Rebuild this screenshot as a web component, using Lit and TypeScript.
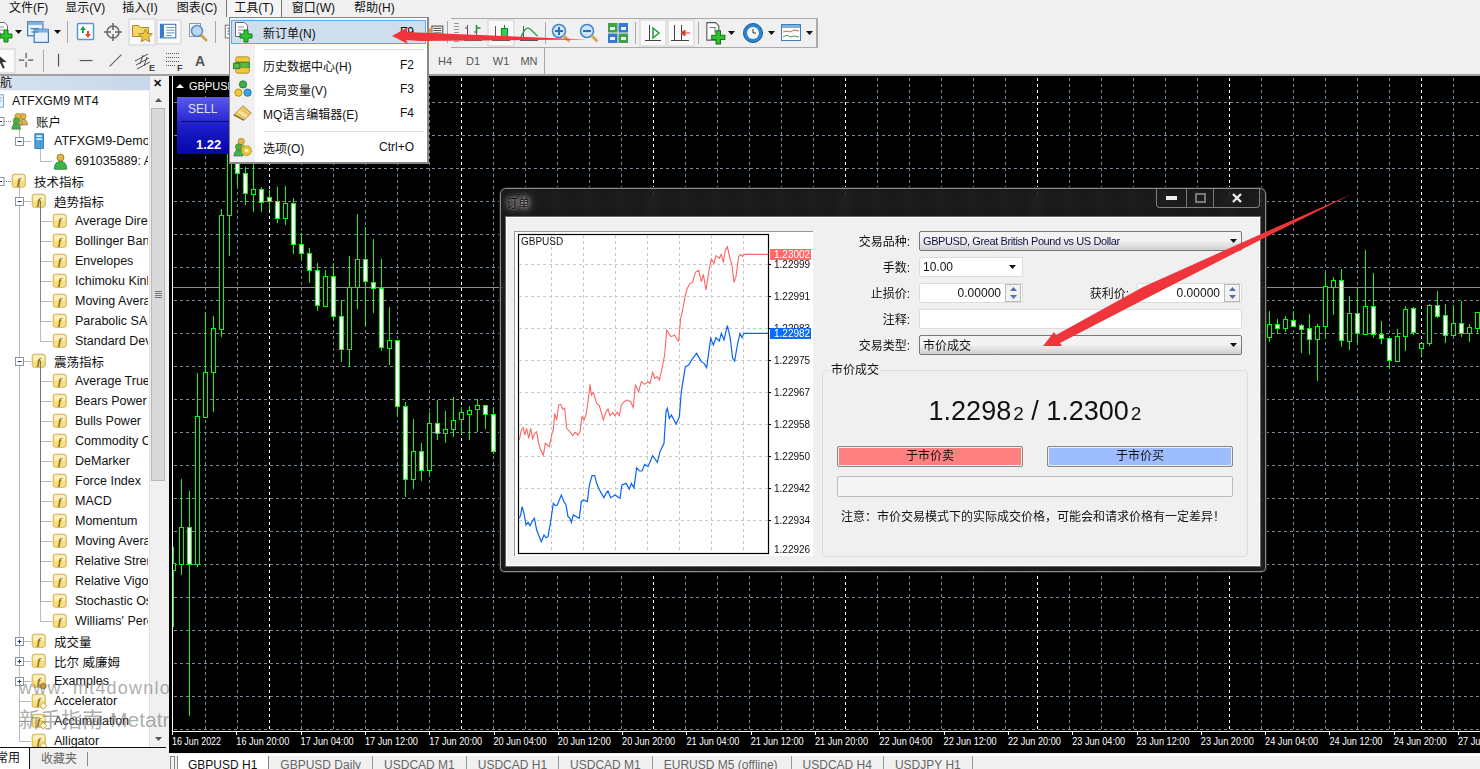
import { LitElement, html, svg, css } from 'lit';
import { customElement } from 'lit/decorators.js';

// ---- small icons -----------------------------------------------------------
const ic = (size: number, body: unknown) => html`<svg width=${size} height=${size} viewBox="0 0 22 22">${body}</svg>`;

const bluePlus = svg`<path d="M12 9h4v4h4v4h-4v4h-4v-4H8v-4h4z" fill="#2fc42f" stroke="#0d7a1a"/>`;
const newOrder = ic(22, svg`<path d="M3.500 1.500h9l3 3v11h-12z" fill="#fff" stroke="#667"/><path d="M6 6h6M6 9h6M6 12h3" stroke="#889"/>${bluePlus}`);
const profiles = ic(24, svg`<rect x="1.500" y="1.500" width="14" height="13" fill="#e8f1fb" stroke="#2a6fb5"/><rect x="1.500" y="1.500" width="14" height="3" fill="#7fb0e2"/><rect x="7.500" y="8.500" width="13" height="12" fill="#e8f1fb" stroke="#2a6fb5"/><rect x="7.500" y="8.500" width="13" height="3" fill="#7fb0e2"/><path d="M4 8h8M5 11h6" stroke="#2a6fb5"/>`);
const market = ic(22, svg`<rect x="2.500" y="2.500" width="16" height="16" rx="1" fill="#fff" stroke="#5a96cf" stroke-width="1.500"/><path d="M8 5l3 4H9v3H7V9H5z" fill="#19a34a"/><path d="M13 17l-3-4h2v-3h2v3h2z" fill="#e5462d"/>`);
const crosshair = ic(22, svg`<circle cx="11" cy="11" r="6" fill="none" stroke="#666" stroke-width="1.500"/><path d="M11 2v7M11 13v7M2 11h7M13 11h7" stroke="#666" stroke-width="1.500"/>`);
const folderStar = ic(22, svg`<path d="M1.500 4.500h6l2 2h8v9h-16z" fill="#f5d565" stroke="#a98a2a"/><path d="M14.500 8l2 4.400 4.800.500-3.600 3.200 1 4.700-4.200-2.400-4.200 2.400 1-4.700-3.600-3.200 4.800-.500z" fill="#f0c640" stroke="#a98a2a"/>`);
const navIcon = ic(20, svg`<rect x="1.500" y="2.500" width="17" height="15" fill="#fff" stroke="#1e5fa8"/><rect x="2" y="3" width="3.500" height="14" fill="#2e7fd0"/><path d="M8 6h9M8 9h9M8 12h9M8 15h6" stroke="#5580aa"/>`);
const magClock = ic(22, svg`<rect x="2.500" y="2.500" width="11" height="13" fill="#eef3f8" stroke="#99a"/><circle cx="10" cy="10" r="5.500" fill="#bcd7f2" stroke="#5a8fc5" stroke-width="1.500"/><path d="M14 14l6 6" stroke="#c9a24a" stroke-width="2.500"/>`);
const listIcon = ic(20, svg`<rect x="2.500" y="3.500" width="15" height="14" fill="#fff" stroke="#666"/><path d="M5 7h10M5 10h10M5 13h10" stroke="#333"/>`);
const oList = ic(20, svg`<rect x="6.500" y="4.500" width="12" height="10" fill="#fff" stroke="#333"/><path d="M8 7h9M8 9.500h9M8 12h9" stroke="#333"/><rect x="1" y="7" width="5" height="5" fill="#ee9a33"/>`);
const barsIcon = ic(22, svg`<path d="M5.500 3v14M3 6h2M5.500 14h3M14.500 3v14M12 10h2" stroke="#555"/><path d="M14.500 3v8M14.500 6h4" stroke="#15953a" stroke-width="1.500"/><path d="M2 18.500h18" stroke="#555"/>`);
const candleIcon = ic(22, svg`<path d="M5.500 4v14M2 18.500h18" stroke="#555"/><path d="M14.500 3v15" stroke="#0c8a2a"/><rect x="11.500" y="6.500" width="6" height="9" fill="#2fd14a" stroke="#0c8a2a"/>`);
const lineIcon = ic(22, svg`<path d="M5.500 4v14M2 18.500h18" stroke="#555"/><path d="M3 15c4-9 6-10 9-8s5 6 8 7" fill="none" stroke="#2f9a4a" stroke-width="1.300"/>`);
const lens = (sign: unknown) => ic(22, svg`<circle cx="9" cy="9" r="6.500" fill="#cfe4f8" stroke="#3f86c7" stroke-width="1.500"/>${sign}<path d="M13.500 13.500l6 6" stroke="#d3aa55" stroke-width="3"/>`);
const zoomIn = lens(svg`<path d="M5 9h8M9 5v8" stroke="#2d6fb0" stroke-width="2"/>`);
const zoomOut = lens(svg`<path d="M5 9h8" stroke="#2d6fb0" stroke-width="2"/>`);
const tile = ic(22, svg`<rect x="1" y="1" width="9.500" height="9.500" fill="#3fa34d"/><rect x="11.500" y="1" width="9.500" height="9.500" fill="#3a78d0"/><rect x="1" y="11.500" width="9.500" height="9.500" fill="#3a78d0"/><rect x="11.500" y="11.500" width="9.500" height="9.500" fill="#3fa34d"/><path d="M3 5h5v3H3zM14 5h5v3h-5zM3 15h5v3H3zM14 15h5v3h-5z" fill="#e6f0e6"/>`);
const shiftIcon = ic(22, svg`<path d="M7.500 3v15.500M3 18.500h16" stroke="#444"/><path d="M11 6l6 5-6 5z" fill="none" stroke="#1aa03a" stroke-width="1.500"/>`);
const autoIcon = ic(22, svg`<path d="M4.500 3v15.500M11.500 3v15.500M1 18.500h18" stroke="#444"/><path d="M20 11h-5M15 8l-4 3 4 3z" fill="#d64028" stroke="#d64028"/>`);
const addChart = ic(24, svg`<path d="M3.500 1.500h8l3 3v13h-11z" fill="#fff" stroke="#555"/><path d="M6 6h5v5" fill="none" stroke="#777"/>${bluePlus}`);
const clockIcon = ic(22, svg`<circle cx="11" cy="11" r="9.500" fill="#2c84cf" stroke="#175a96"/><circle cx="11" cy="11" r="6" fill="#f4f8fb"/><path d="M11 7v4h3" fill="none" stroke="#333"/>`);
const templateIcon = ic(22, svg`<rect x="1.500" y="2.500" width="19" height="16" fill="#fff" stroke="#3f7fbf"/><rect x="2" y="3" width="18" height="3" fill="#7fb0e2"/><path d="M3 10l4-1 3 1 4-2 5 1" fill="none" stroke="#c9683a"/><path d="M3 15l4-2 3 2 4-1 5 1" fill="none" stroke="#3aa04a"/>`);
const arrowCur = ic(20, svg`<path d="M4 3l11 9-5 .500 3 6-2 1-3-6-4 3z" fill="#333"/>`);
const crossTool = ic(20, svg`<path d="M10 2v6M10 12v6M2 10h6M12 10h6" stroke="#555" stroke-width="1.300"/>`);
const vLine = ic(20, svg`<path d="M10.500 3v14" stroke="#555" stroke-width="1.300"/>`);
const hLine = ic(20, svg`<path d="M3 10.500h14" stroke="#555" stroke-width="1.300"/>`);
const dLine = ic(20, svg`<path d="M4 17L17 4" stroke="#666" stroke-width="1.300"/>`);
const channelIcon = ic(22, svg`<path d="M1 11l13-7M2 15l13-7M3 19l13-7M6 14l3-9M10 16l3-9" stroke="#555"/><text x="15" y="21" font-size="9" font-weight="700" fill="#444" font-family="Liberation Sans">E</text>`);
const fiboIcon = ic(22, svg`<path d="M2 3.500h14M2 7.500h14M2 11.500h14M2 15.500h10" stroke="#555" stroke-dasharray="1 1"/><text x="13" y="21" font-size="9" font-weight="700" fill="#444" font-family="Liberation Sans">F</text>`);
const aIcon = html`<span class="a-tool">A</span>`;

const fBox = (extra: unknown = '') => ic(17, svg`<rect x="1.500" y="1.500" width="17" height="17" rx="3" fill="#f7df80" stroke="#c2a23e"/><rect x="3" y="3" width="14" height="7" rx="2" fill="#fdf1bd"/><text x="10" y="15" text-anchor="middle" font-size="14" font-style="italic" font-weight="700" fill="#8a6a12" font-family="Liberation Serif">f</text>${extra}`);
const treeF = fBox();
const treeEx = fBox(svg`<circle cx="16" cy="17" r="3.500" fill="#d99a2b" stroke="#8a5d10"/>`);
const treeInd = fBox(svg`<path d="M16 12l4.500 4.500-4.500 4.500-4.500-4.500z" fill="#fff6d0" stroke="#b08a2a"/>`);
const person = (c: string, x: number, y: number) => svg`<circle cx=${x} cy=${y} r="3.500" fill=${c} stroke="#8a6a12" stroke-width=".6"/><path d="M${x - 5} ${y + 10}c0-5 2-6.500 5-6.500s5 1.500 5 6.500z" fill=${c} stroke="#555" stroke-width=".6"/>`;
const accounts = ic(19, svg`${person('#e0b84a', 14, 5)}${person('#e0b84a', 8, 5)}${person('#3bb54a', 6, 10)}`);
const server = ic(17, svg`<rect x="5" y="1" width="11" height="19" fill="#4aa3e0" stroke="#1c6aa8"/><rect x="7" y="3" width="7" height="2" fill="#e7f4fd"/><rect x="7" y="7" width="7" height="2" fill="#e7f4fd"/>`);
const user = ic(17, svg`<circle cx="11" cy="6" r="4.500" fill="#e0b84a" stroke="#8a6a12"/><path d="M3 21c0-7 3-10 8-10s8 3 8 10z" fill="#3bb54a" stroke="#1a7a2a"/>`);
const rootIcon = ic(16, svg`<rect x="3.500" y="2.500" width="15" height="17" fill="#eaf3fb" stroke="#4a8cc5"/><path d="M6 7h10M6 11h10" stroke="#4a8cc5"/>`);

const menuHist = ic(20, svg`<rect x="3" y="2" width="15" height="6" rx="2" fill="#f2c83a" stroke="#a98a2a"/><rect x="3" y="8" width="15" height="6" fill="#58b848" stroke="#2a7a2a"/><rect x="3" y="14" width="15" height="6" rx="2" fill="#f2c83a" stroke="#a98a2a"/><rect x="0.500" y="9" width="7" height="6" fill="#58b848" stroke="#2a7a2a"/>`);
const menuVars = ic(20, svg`<circle cx="11" cy="6" r="4" fill="#42b04a" stroke="#1f7a2a"/><circle cx="6" cy="15" r="4" fill="#f0c93a" stroke="#a88a1a"/><circle cx="16" cy="15" r="4" fill="#3aa6e0" stroke="#1a70a8"/>`);
const menuEd = ic(20, svg`<path d="M1 13L11 3l9 8-8 8z" fill="#ecc662" stroke="#a9853a"/><path d="M1 13l11 6" stroke="#8a6a22" stroke-width="1.500"/><path d="M6 9l9 6" stroke="#f8e7a8" stroke-width="3"/>`);
const menuOpt = ic(20, svg`${person('#e0b84a', 9, 5)}${person('#3bb54a', 6, 11)}<circle cx="15" cy="15" r="5.500" fill="#e6c43a" stroke="#a88a1a" stroke-dasharray="2 1"/><circle cx="15" cy="15" r="2" fill="#fff7c8"/>`);

const caret = html`<svg width="7" height="4" viewBox="0 0 7 4"><path d="M0 0h7L3.500 4z" fill="#111"/></svg>`;

// ---- chart data, measured from the picture ---------------------------------
// [bodyTop, bodyBottom, wickTop, wickBottom, filled]; y = base + v / 3
type Candle = [number, number, number, number, number];
const leftCandles: Candle[] = [
  [1239,1260,1191,1431,0],[1131,1242,987,1275,0],[1131,1242,1023,1698,1],[798,1242,670,1251,0],[667,800,485,800,0],
  [535,665,498,785,0],[196,536,178,560,0],[-60,196,-60,318,0],[-60,70,-60,110,1],[70,128,52,165,1],[118,131,40,186,0],
  [118,157,112,186,1],[140,152,120,180,1],[154,203,112,218,1],[160,203,108,225,0],[160,281,145,312,1],[281,310,250,332,1],
  [310,361,295,398,1],[361,466,340,482,1],[379,467,360,470,0],[379,497,340,510,1],[497,598,450,635,1],[410,598,318,650,0],
  [328,410,192,476,0],[328,394,232,528,1],[397,415,267,488,1],[414,592,328,603,1],[571,593,471,645,0],[571,769,571,800,1],
  [769,988,757,1040,1],[904,988,807,1016,0],[904,961,880,992,1],[820,961,786,976,0],[820,850,750,870,1],[838,850,783,878,0],
  [811,838,742,860,0],[787,808,770,852,0],[781,791,768,870,0],[766,778,748,845,0],[766,793,766,838,1],[793,902,772,912,1],
];
const rightCandles: Candle[] = [
  [193,230,153,246,0],[193,203,178,222,1],[178,203,168,216,0],[181,197,153,197,1],[196,206,192,278,1],[205,238,162,285,1],
  [199,238,193,362,0],[79,199,40,237,0],[61,80,52,165,0],[61,241,27,260,1],[160,244,108,270,0],[160,220,85,255,1],
  [139,223,-30,223,0],[139,223,40,233,1],[223,235,183,252,1],[235,301,235,327,1],[229,302,207,302,0],[148,229,138,273,0],
  [145,215,141,225,1],[250,265,250,288,0],[136,250,132,258,0],[136,167,93,173,1],[166,226,132,249,1],[190,226,135,232,0],
  [190,220,123,232,1],[202,220,192,246,0],[157,203,157,220,0],
];
// lines of the order dialog, in 3x picture units
const askLine = '58,765 64,735 70,728 74,750 80,730 86,760 92,730 98,762 104,745 110,740 116,775 122,795 130,810 136,775 148,785 156,745 160,735 164,685 170,705 176,660 182,658 188,672 194,670 200,730 208,738 218,752 226,742 234,750 240,740 246,695 252,705 258,690 264,650 270,598 274,630 280,622 290,655 298,662 310,705 318,680 324,672 330,692 338,683 344,692 352,682 358,692 364,660 372,650 382,645 392,650 400,668 406,600 416,620 424,590 434,598 444,590 450,596 458,562 464,580 472,575 478,585 486,550 494,510 500,435 508,448 514,455 524,450 530,462 536,468 542,400 548,375 556,330 562,310 570,295 578,292 586,262 596,256 604,290 610,268 618,315 628,250 634,222 642,235 648,212 658,220 664,208 670,232 676,195 682,185 690,220 696,240 702,292 708,275 716,215 722,208 728,215 732,208 805,208';
const bidLine = '58,1000 62,990 66,965 72,985 78,1020 84,1012 90,1022 96,1010 103,1000 110,1035 118,1055 124,1070 132,1050 138,1058 144,1055 152,1010 160,955 166,962 172,960 184,930 192,950 198,960 204,995 210,1000 214,1012 220,990 238,1000 244,950 250,945 262,950 268,900 276,872 284,872 290,895 296,910 304,925 312,938 318,925 324,918 332,938 345,930 360,940 366,900 378,895 388,912 394,895 402,908 410,848 418,858 426,858 434,838 444,845 458,812 472,832 480,800 492,775 498,680 502,670 508,700 514,690 522,705 528,717 538,695 544,620 556,545 566,540 578,520 590,505 604,530 612,535 620,548 632,460 640,480 648,458 658,468 664,445 672,465 682,422 690,455 698,520 704,528 712,480 720,445 726,458 732,445 805,445';

const timeLabels = (() => {
  const out: string[] = ['16 Jun 2022'];
  let d = 16, h = 20;
  for (let i = 1; i < 21; i++) {
    out.push(`${d} Jun ${String(h).padStart(2, '0')}:00`);
    h += 8;
    if (h >= 24) { h -= 24; d++; }
    if (d === 18) d = 20; // weekend
    if (d === 25) d = 27;
  }
  return out;
})();

type Row = { t: string; l: number; i: unknown; e?: '+' | '-' };
const ind = (names: string[]): Row[] => names.map((t) => ({ t, l: 3, i: treeF }));
const treeRows: Row[] = [
  { t: 'ATFXGM9 MT4', l: 0, i: rootIcon },
  { t: '账户', l: 1, i: accounts, e: '-' },
  { t: 'ATFXGM9-Demo', l: 2, i: server, e: '-' },
  { t: '691035889: ATFX', l: 3, i: user },
  { t: '技术指标', l: 1, i: treeF, e: '-' },
  { t: '趋势指标', l: 2, i: treeF, e: '-' },
  ...ind(['Average Directional', 'Bollinger Bands', 'Envelopes', 'Ichimoku Kinko', 'Moving Average', 'Parabolic SAR', 'Standard Deviation']),
  { t: '震荡指标', l: 2, i: treeF, e: '-' },
  ...ind(['Average True Range', 'Bears Power', 'Bulls Power', 'Commodity Channel', 'DeMarker', 'Force Index', 'MACD', 'Momentum', 'Moving Average', 'Relative Strength', 'Relative Vigor', 'Stochastic Osc', "Williams' Percent"]),
  { t: '成交量', l: 2, i: treeF, e: '+' },
  { t: '比尔 威廉姆', l: 2, i: treeF, e: '+' },
  { t: 'Examples', l: 2, i: treeEx, e: '+' },
  { t: 'Accelerator', l: 2, i: treeInd },
  { t: 'Accumulation', l: 2, i: treeInd },
  { t: 'Alligator', l: 2, i: treeInd },
];

type Tool = { w: number; i?: unknown; on?: boolean; sep?: boolean };
const t = (w: number, i?: unknown, on = false): Tool => ({ w, i, on });
const sep = (w: number): Tool => ({ w, sep: true });

const bar1Left: Tool[] = [
  t(22, newOrder), t(8, caret), t(32, profiles), t(6, caret), sep(15), t(21, market), t(34, crosshair),
  t(24, folderStar, true), t(30, navIcon, true), t(28, magClock), sep(7), t(28, listIcon), t(181), t(16, oList),
];
const bar1Right: Tool[] = [
  t(28, barsIcon), t(28, candleIcon, true), t(28, lineIcon), sep(4), t(28, zoomIn), t(28, zoomOut), t(29, tile), sep(6),
  t(29, shiftIcon, true), t(28, autoIcon, true), sep(6), t(27, addChart), t(6, caret), t(5), t(27, clockIcon), t(10, caret),
  t(30, templateIcon), t(6, caret),
];
const bar2: Tool[] = [
  t(22, arrowCur, true), t(26, crossTool), sep(6), t(26, vLine), t(30, hLine), t(28, dLine), t(30, channelIcon), t(30, fiboIcon),
  t(20, aIcon), t(14),
];

@customElement('app-root')
export class AppRoot extends LitElement {
  static styles = css`
    :host {
      display: block;
      position: relative;
      width: 1480px;
      height: 769px;
      overflow: hidden;
      background: #f0f0f0;
      color: #111;
      font-family: "Liberation Sans", "Noto Sans CJK SC", sans-serif;
      font-size: 12px;
    }
    svg { display: block; flex: none; }

    .menubar { display: flex; height: 17px; padding-left: 1px; line-height: 16px; }
    .menubar span { padding: 0 8px; margin-right: 1px; white-space: nowrap; }
    .menubar span:nth-child(3) { margin-right: 3px; }
    .menubar span:nth-child(6) { margin-right: 3px; }
    .menubar span.open {
      padding: 0 7px;
      margin: 0 2px 0 0;
      border-left: 1px solid #777;
      border-right: 1px solid #777;
      background: #f5f5f5;
    }

    .tb { display: flex; align-items: center; height: 30px; margin-left: -8px; }
    .tb2 { height: 27px; border-bottom: 2px solid #a0a0a0; }
    .tool { display: flex; align-items: center; justify-content: center; flex: none; height: 100%; }
    .tool.on > svg, .tool.on > .a-tool {
      padding: 2px;
      background: #fafafa;
      outline: 2px solid #e2e2e2;
      outline-offset: -1px;
    }
    .sepline { width: 1px; height: 22px; background: #a8a8a8; }
    .grip { width: 5px; height: 20px; margin-left: 3px; background: repeating-linear-gradient(#999 0 1px, transparent 1px 3px); }
    .group {
      display: flex;
      align-items: center;
      height: 28px;
      margin-top: 2px;
      padding-right: 4px;
      border: 1px solid #aaa;
      border-width: 1px 2px 1px 0;
    }
    .a-tool { font-size: 14px; font-weight: 700; color: #555; }
    .tf { color: #555; font-size: 11px; width: 28px; text-align: center; flex: none; }
    .tf-first { margin-left: 3px; }
    .tf-end { width: 1px; height: 27px; background: #a8a8a8; margin-left: 1px; }
    .spacer { width: 198px; }
    .stub { width: 6px; }

    .main { display: flex; height: 693px; }
    .nav { width: 166px; display: flex; flex-direction: column; flex: none; }
    .nav-head {
      display: flex;
      align-items: center;
      justify-content: space-between;
      height: 14px;
      line-height: 14px;
      margin-left: -12px;
      padding-right: 3px;
    }
    .nav-title { width: 162px; background: linear-gradient(90deg, #d7e2ef, #c8d8ea); }
    .nav-x { font-size: 11px; font-weight: 700; margin-right: 1px; }
    .nav-body { position: relative; display: flex; flex: 1; min-height: 0; margin-top: 1px; }
    .tree { position: relative; width: 149px; overflow: hidden; background: #fff; }
    .row {
      display: flex;
      align-items: center;
      gap: 6px;
      width: 148px;
      box-sizing: border-box;
      overflow: hidden;
      height: 20px;
      white-space: nowrap;
      font-size: 12.500px;
      color: #111;
    }
    .l0 { margin-left: -10px; width: 158px; }
    .l1 { padding-left: 11px; }
    .l2 { padding-left: 31px; }
    .l3 { padding-left: 52px; }
    .guides { position: absolute; left: 0; top: 0; }
    .wm {
      position: absolute;
      left: 19px;
      white-space: nowrap;
      width: 153px;
      overflow: hidden;
      color: rgba(120, 120, 120, 0.62);
    }
    .wm1 { top: 675px; font-size: 18px; letter-spacing: 1.200px; line-height: 26px; }
    .wm2 { top: 706px; font-size: 21px; line-height: 28px; }
    .scroll { width: 16px; display: flex; flex-direction: column; align-items: center; background: #f0f0f0; border-left: 1px solid #e0e0e0; }
    .sc-btn { height: 17px; display: flex; align-items: center; justify-content: center; flex: none; }
    .thumb {
      width: 14px;
      height: 373px;
      display: flex;
      align-items: center;
      justify-content: center;
      background: #d9d9d9;
      border: 1px solid #b8b8b8;
      box-sizing: border-box;
    }
    .thumb i { display: block; width: 7px; height: 7px; background: repeating-linear-gradient(#777 0 1px, transparent 1px 2px); }
    .sc-rest { flex: 1; }
    .nav-tabs { display: flex; align-items: center; height: 21px; border-top: 1px solid #111; flex: none; }
    .nt-on {
      width: 30px;
      flex: none;
      display: flex;
      justify-content: flex-end;
      padding-right: 9px;
      box-sizing: border-box;
      border-right: 1px solid #111;
      height: 100%;
      line-height: 20px;
      background: #fff;
      white-space: nowrap;
      overflow: hidden;
    }
    .nt { color: #666; padding: 0 10px 0 11px; border-right: 1px solid #888; line-height: 14px; }

    .work { flex: 1; display: flex; flex-direction: column; margin-left: 3px; min-width: 0; }
    .chart { background: #000; height: 677px; flex: none; }
    .chart-tabs {
      display: flex;
      height: 14px;
      margin-top: 1px;
      border-top: 2px solid #fff;
      overflow: hidden;
      color: #666;
      padding-left: 1px;
    }
    .chart-tabs::before { content: ''; width: 3px; margin-right: 2px; border: 1px solid #888; border-bottom: 0; flex: none; }
    .ct { padding: 0 11px; line-height: 19px; border-right: 1px solid #999; white-space: nowrap; height: 14px; }
    .ct.on { color: #111; background: #fff; border-left: 1px solid #888; border-right: 1px solid #888; padding: 0 11px 0 10px; }
    .ct.wide { padding: 0 13px 0 11px; }

    .symbol { position: absolute; left: 175px; top: 78px; width: 60px; }
    .sym-name { display: flex; align-items: center; gap: 3px; height: 15px; color: #fff; font-size: 11px; padding-left: 1px; white-space: nowrap; }
    .tri { width: 0; height: 0; border: 4px solid transparent; border-top: 0; border-bottom: 4px solid #fff; margin-right: 2px; }
    .sell {
      margin: 4px 0 0 2px;
      height: 57px;
      background: linear-gradient(#5a5af0, #1a1ac8 55%, #0505a8);
      color: #fff;
    }
    .sell-l { padding: 5px 0 0 11px; height: 19px; font-size: 12px; color: #dfe3ff; }
    .sell-r { border-top: 1px solid #0a0a70; margin: 0 4px; padding: 15px 0 0 15px; font-size: 13px; font-weight: 700; }

    .menu {
      position: absolute;
      left: 229px;
      top: 17px;
      width: 195px;
      padding: 2px 1px 3px;
      background: linear-gradient(90deg, #f0f0f0 0 25px, #fff 25px);
      border: 1px solid #888;
      border-right-width: 2px;
      border-bottom-width: 2px;
      z-index: 2;
    }
    .mi { display: flex; align-items: center; height: 24px; padding-right: 12px; }
    .mi.hl { background: #cfdeed; outline: 1px solid #5aa8f2; outline-offset: -1px; }
    .mi .mic { width: 24px; display: flex; justify-content: center; }
    .mi .lbl { margin-left: 8px; flex: 1; }
    .msep { height: 1px; margin: 5px 2px 3px 33px; background: #ddd; }
    .msep.b { margin: 6px 2px 3px 33px; }

    .dialog {
      position: absolute;
      left: 500px;
      top: 188px;
      width: 766px;
      height: 384px;
      box-sizing: border-box;
      display: flex;
      flex-direction: column;
      padding: 0 4px 4px;
      border: 1px solid #8a8a8a;
      border-radius: 6px 6px 4px 4px;
      background: rgba(45, 45, 45, 0.55);
      backdrop-filter: blur(6px);
      box-shadow: 0 0 0 1px #222;
      z-index: 1;
    }
    .dlg-title { display: flex; height: 27px; flex: none; }
    .dlg-name {
      color: #181018;
      font-size: 12px;
      padding-top: 5px;
      margin-left: 1px;
      text-shadow: 0 0 3px #c8c8c8, 0 0 7px #aaa, 0 0 12px #999;
    }
    .dlg-btns {
      display: flex;
      height: 18px;
      margin-left: auto;
      margin-right: 1px;
      border: 1px solid #808080;
      border-top: 0;
      border-radius: 0 0 4px 4px;
    }
    .dlg-btns div { display: flex; align-items: center; justify-content: center; border-left: 1px solid #777; }
    .dlg-btns div:first-child { width: 29px; border-left: 0; }
    .dlg-btns div:nth-child(2) { width: 26px; }
    .dlg-btns div:nth-child(3) { width: 45px; }
    .client {
      flex: 1;
      display: flex;
      gap: 9px;
      padding: 14px 0 0 8px;
      background: #f0f0f0;
      border: 1px solid #666;
      box-shadow: inset 0 0 0 1px #fff;
      min-height: 0;
    }
    .pane { width: 299px; height: 325px; flex: none; background: #fff; border-top: 1px solid #999; border-left: 1px solid #999; box-sizing: border-box; }
    .side { width: 426px; flex: none; }
    .form { display: grid; grid-template-columns: 88px 1fr; column-gap: 9px; row-gap: 6px; grid-auto-rows: 20px; align-items: center; padding-right: 6px; }
    .lab { text-align: right; white-space: nowrap; padding-bottom: 2px; }
    .select {
      display: flex;
      align-items: center;
      justify-content: space-between;
      height: 20px;
      box-sizing: border-box;
      padding: 0 4px 0 3px;
      background: linear-gradient(#f3f3f3 45%, #cfcfcf);
      border: 1px solid #777;
      border-radius: 2px;
      color: #10104a;
      font-size: 11px;
      letter-spacing: -0.400px;
    }
    .select .cjk { font-size: 12px; letter-spacing: 0; color: #111; padding-bottom: 2px; }
    .input {
      height: 20px;
      box-sizing: border-box;
      background: #fff;
      border: 1px solid #dcdcdc;
      border-radius: 2px;
      display: flex;
      align-items: center;
      padding: 0 3px;
    }
    .lots { width: 104px; justify-content: space-between; padding-right: 6px; }
    .wide-input { width: 100%; }
    .sl { display: flex; align-items: center; justify-content: space-between; }
    .spin { width: 104px; justify-content: flex-end; padding: 0 1px 0 0; gap: 4px; }
    .tp { width: 105px; }
    .sl .lab { margin-left: auto; margin-right: 8px; }
    .arrows { width: 16px; height: 18px; display: flex; flex-direction: column; justify-content: space-around; align-items: center; border: 1px solid #bbb; box-sizing: border-box; background: #f2f2f2; }
    .group-box {
      position: relative;
      margin-top: 15px;
      height: 187px;
      box-sizing: border-box;
      padding: 24px 14px 0;
      border: 1px solid #d7dfe6;
      border-radius: 4px;
    }
    .legend { position: absolute; left: 7px; top: -8px; padding: 0 1px; background: #f0f0f0; line-height: 15px; }
    .price { height: 32px; line-height: 32px; text-align: center; font-size: 27px; color: #111; white-space: nowrap; }
    .price small { font-size: 19px; margin-left: 2px; }
    .btns { display: flex; justify-content: space-between; margin-top: 19px; }
    .btn { width: 186px; height: 21px; line-height: 19px; text-align: center; box-sizing: border-box; border: 1px solid #888; border-radius: 2px; box-shadow: inset 0 0 0 1px #eee; }
    .sellb { background: #ff8080; }
    .buyb { background: #9dbdff; }
    .bar { height: 21px; margin-top: 9px; box-sizing: border-box; background: #f4f4f4; border: 1px solid #bcbcbc; border-radius: 2px; }
    .note { margin-top: 12px; padding-left: 4px; line-height: 16px; white-space: nowrap; }

    .arrows-layer { position: absolute; left: 0; top: 0; z-index: 3; pointer-events: none; }
  `;

  private tools(list: Tool[]) {
    return list.map((x) => html`<div class="tool ${x.on ? 'on' : ''}" style="width:${x.w}px">
      ${x.sep ? html`<div class="sepline"></div>` : x.i}
    </div>`);
  }

  private guides() {
    const parts: unknown[] = [];
    let lastL1 = 0, lastL2 = 0;
    treeRows.forEach((r, idx) => {
      const y = idx * 20 + 10.5;
      if (r.l === 1) {
        parts.push(svg`<path d="M0 ${y}H11"/>`);
        lastL1 = idx;
      }
      if (r.l === 2) {
        const from = Math.max(lastL1, lastL2) * 20 + 10.5;
        parts.push(svg`<path d="M19.500 ${from}V${y}M19.500 ${y}H31"/>`);
        lastL2 = idx;
      }
      if (r.l === 3) {
        parts.push(svg`<path d="M40.500 ${lastL2 * 20 + 10.5}V${y}M40.500 ${y}H52"/>`);
      }
    });
    const boxes = treeRows.map((r, idx) => {
      if (!r.e) return '';
      const x = r.l === 1 ? 0 : 19.5;
      const y = idx * 20 + 10.5;
      return svg`<rect x=${x - 4} y=${y - 4} width="8" height="8" fill="#fff" stroke="#8a94a6"/>
        <path d="M${x - 2} ${y}h4${r.e === '+' ? ` M${x} ${y - 2}v4` : ''}" stroke="#223a78"/>`;
    });
    return svg`<g fill="none" stroke="#777" stroke-dasharray="1 1">${parts}</g>${boxes}`;
  }

  private chart() {
    const vs: unknown[] = [];
    for (let x = 205; x < 1480; x += 32) {
      const white = (x - 269) % 192 === 0;
      vs.push(svg`<path d="M${x + 0.5} 78V731" stroke=${white ? '#fff' : '#778899'} stroke-dasharray="3 3"/>`);
    }
    const hs: unknown[] = [];
    for (let y = 102; y < 731; y += 33) hs.push(svg`<path d="M174 ${y + 0.5}H1480" stroke="#778899" stroke-dasharray="3 3"/>`);
    const candle = (c: Candle, x: number, base: number) => {
      const y = (v: number) => Math.round(base + v / 3);
      return svg`<path d="M${x + 0.5} ${y(c[2])}V${y(c[3])}" stroke="#00ff00"/>
        <rect x=${x - 1.5} y=${y(c[0]) + 0.5} width="4" height=${Math.max(y(c[1]) - y(c[0]), 2)} fill=${c[4] ? '#fff' : '#000'} stroke="#00ff00"/>`;
    };
    const ticks = timeLabels.map((s, i) => {
      const x = 172 + 64.3 * i;
      return svg`<path d="M${Math.round(x) + 0.5} 731v4" stroke="#fff"/>
        <text x=${x} y="745" fill="#fff" font-size="10.5" font-family="Liberation Sans" textLength=${i ? 53 : 49} lengthAdjust="spacingAndGlyphs">${s}</text>`;
    });
    return html`<svg width="1311" height="677" viewBox="169 76 1311 677">
      <defs><clipPath id="plot"><rect x="173" y="76" width="1307" height="655"/></clipPath></defs>
      ${vs}${hs}
      <path d="M173 287.500H1480" stroke="#8a9098"/>
      <g clip-path="url(#plot)">
        ${leftCandles.map((c, i) => candle(c, 173 + 8 * i, 150))}
        ${rightCandles.map((c, i) => candle(c, 1269 + 8 * i, 260))}
      </g>
      <path d="M172.500 76V731.500H1480" fill="none" stroke="#fff"/>
      ${ticks}
    </svg>`;
  }

  private orderChart() {
    const ys = [264, 296, 328, 360, 392, 424, 456, 488, 520];
    const xs = [551, 583, 615, 647, 679, 711, 743];
    const labels = ['1.22999', '1.22991', '1.22983', '1.22975', '1.22967', '1.22958', '1.22950', '1.22942', '1.22934'];
    const pts = (line: string) => line.split(' ').map((p) => {
      const [a, b] = p.split(',').map(Number);
      return `${500 + a / 3},${185 + b / 3}`;
    }).join(' ');
    return html`<svg width="298" height="324" viewBox="515 232 298 324">
      <rect x="518.500" y="234.500" width="250" height="319" fill="#fff" stroke="#000" stroke-width="1.200"/>
      ${xs.map((x) => svg`<path d="M${x + 0.5} 235V553" stroke="#c8c8c8" stroke-dasharray="3 3"/>`)}
      ${ys.map((y) => svg`<path d="M519 ${y + 0.5}H768" stroke="#c8c8c8" stroke-dasharray="3 3"/>`)}
      <polyline points=${pts(askLine)} fill="none" stroke="#ff6464" stroke-width="1.100"/>
      <polyline points=${pts(bidLine)} fill="none" stroke="#0a64f0" stroke-width="1.200"/>
      <text x="521" y="245" font-size="10" fill="#111" font-family="Liberation Sans">GBPUSD</text>
      ${ys.map((y, i) => svg`<path d="M768 ${y + 0.5}h3" stroke="#000"/><text x="774" y=${y + 4} font-size="10" fill="#111" font-family="Liberation Sans">${labels[i]}</text>`)}
      <text x="774" y="553" font-size="10" fill="#111" font-family="Liberation Sans">1.22926</text>
      <rect x="770" y="249" width="41" height="11" fill="#ff6a6a"/>
      <text x="774" y="258" font-size="10" fill="#fff" font-family="Liberation Sans">1.23002</text>
      <rect x="770" y="328" width="41" height="11" fill="#0a6cff"/>
      <text x="774" y="337" font-size="10" fill="#fff" font-family="Liberation Sans">1.22982</text>
    </svg>`;
  }

  render() {
    const smallArrows = (c = '#5570a8') => html`<div class="arrows">
      <svg width="7" height="4" viewBox="0 0 7 4"><path d="M3.500 0L7 4H0z" fill=${c}/></svg>
      <svg width="7" height="4" viewBox="0 0 7 4"><path d="M0 0h7L3.500 4z" fill=${c}/></svg>
    </div>`;
    return html`
      <div class="menubar">
        <span>文件(F)</span><span>显示(V)</span><span>插入(I)</span><span>图表(C)</span>
        <span class="open">工具(T)</span><span>窗口(W)</span><span>帮助(H)</span>
      </div>
      <div class="tb">
        ${this.tools(bar1Left)}
        ${this.tools([sep(7)])}
        <div class="group">
          <div class="grip"></div>
          ${this.tools(bar1Right)}
        </div>
      </div>
      <div class="tb tb2">
        ${this.tools(bar2)}
        <div class="tool spacer"></div>
        <div class="tool on stub"></div>
        <span class="tf tf-first">H4</span><span class="tf">D1</span><span class="tf">W1</span><span class="tf">MN</span>
        <div class="tf-end"></div>
      </div>

      <div class="main">
        <div class="nav">
          <div class="nav-head"><div class="nav-title">导航</div><span class="nav-x">✕</span></div>
          <div class="nav-body">
            <div class="tree">
              ${treeRows.map((r) => html`<div class="row l${r.l}">${r.i}<span>${r.t}</span></div>`)}
              <svg class="guides" width="60" height="660">${this.guides()}</svg>
            </div>
            <div class="scroll">
              <div class="sc-btn"><svg width="7" height="4" viewBox="0 0 7 4"><path d="M3.500 0L7 4H0z" fill="#555"/></svg></div>
              <div class="thumb"><i></i></div>
              <div class="sc-rest"></div>
              <div class="sc-btn"><svg width="7" height="4" viewBox="0 0 7 4"><path d="M0 0h7L3.500 4z" fill="#555"/></svg></div>
            </div>
          </div>
          <div class="nav-tabs"><div class="nt-on">常用</div><div class="nt">收藏夹</div></div>
        </div>
        <div class="work">
          <div class="chart">${this.chart()}</div>
          <div class="chart-tabs">
            <div class="ct on">GBPUSD H1</div><div class="ct">GBPUSD Daily</div><div class="ct">USDCAD M1</div>
            <div class="ct">USDCAD H1</div><div class="ct">USDCAD M1</div><div class="ct wide">EURUSD M5 (offline)</div>
            <div class="ct">USDCAD H4</div><div class="ct">USDJPY H1</div>
          </div>
        </div>
      </div>

      <div class="wm wm1">www. mt4downlo</div>
      <div class="wm wm2">新手指南-Metatr</div>

      <div class="symbol">
        <div class="sym-name"><span class="tri"></span>GBPUSD,H1</div>
        <div class="sell"><div class="sell-l">SELL</div><div class="sell-r">1.22</div></div>
      </div>

      <div class="menu">
        <div class="mi hl"><div class="mic">${newOrder}</div><span class="lbl">新订单(N)</span><span>F9</span></div>
        <div class="msep"></div>
        <div class="mi"><div class="mic">${menuHist}</div><span class="lbl">历史数据中心(H)</span><span>F2</span></div>
        <div class="mi"><div class="mic">${menuVars}</div><span class="lbl">全局变量(V)</span><span>F3</span></div>
        <div class="mi"><div class="mic">${menuEd}</div><span class="lbl">MQ语言编辑器(E)</span><span>F4</span></div>
        <div class="msep b"></div>
        <div class="mi"><div class="mic">${menuOpt}</div><span class="lbl">选项(O)</span><span>Ctrl+O</span></div>
      </div>

      <div class="dialog">
        <div class="dlg-title">
          <div class="dlg-name">订单</div>
          <div class="dlg-btns">
            <div><svg width="11" height="4"><rect width="11" height="4" fill="#eee"/></svg></div>
            <div><svg width="11" height="10"><rect x="1" y="1" width="9" height="8" fill="none" stroke="#777" stroke-width="2"/></svg></div>
            <div><svg width="10" height="10" viewBox="0 0 10 10"><path d="M1 1l8 8M9 1L1 9" stroke="#eee" stroke-width="2.400"/></svg></div>
          </div>
        </div>
        <div class="client">
          <div class="pane">${this.orderChart()}</div>
          <div class="side">
            <div class="form">
              <div class="lab">交易品种:</div>
              <div class="select"><span>GBPUSD, Great British Pound vs US Dollar</span>${caret}</div>
              <div class="lab">手数:</div>
              <div class="input lots"><span>10.00</span>${caret}</div>
              <div class="lab">止损价:</div>
              <div class="sl">
                <div class="input spin"><span>0.00000</span>${smallArrows()}</div>
                <div class="lab">获利价:</div>
                <div class="input spin tp"><span>0.00000</span>${smallArrows()}</div>
              </div>
              <div class="lab">注释:</div>
              <div class="input wide-input"></div>
              <div class="lab">交易类型:</div>
              <div class="select"><span class="cjk">市价成交</span>${caret}</div>
            </div>
            <div class="group-box">
              <div class="legend">市价成交</div>
              <div class="price">1.2298<small>2</small> / 1.2300<small>2</small></div>
              <div class="btns"><div class="btn sellb">于市价卖</div><div class="btn buyb">于市价买</div></div>
              <div class="bar"></div>
              <div class="note">注意：市价交易模式下的实际成交价格，可能会和请求价格有一定差异！</div>
            </div>
          </div>
        </div>
      </div>

      <svg class="arrows-layer" width="1480" height="769">
        <path d="M392 36L408 27 406 32 587 39.500 420 41 406 40 408 44z" fill="#f0343c"/>
        <path d="M1043 346L1054 332 1056 335 1143 287 1270 230 1352 194 1270 235 1143 300 1060 343 1062 346z" fill="#f0343c"/>
      </svg>
    `;
  }
}
